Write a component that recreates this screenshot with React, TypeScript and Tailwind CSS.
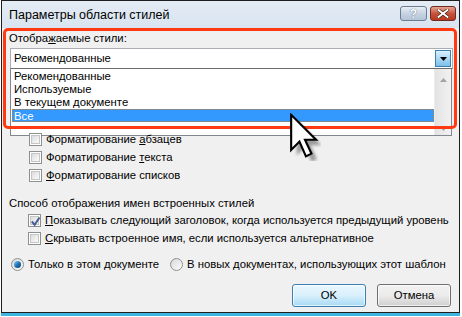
import React from "react";

function CheckBox({ checked = false }: { checked?: boolean }) {
  return (
    <div className="w-[13px] h-[13px] border border-[#8e8f8f] bg-white p-px shrink-0">
      <div className="w-full h-full border border-[#c6c6c6] bg-gradient-to-br from-[#dcdcdc] to-[#fbfbfb] relative">
        {checked && (
          <svg viewBox="0 0 9 9" className="absolute -left-px -top-px w-[11px] h-[11px]">
            <path d="M1.5 4.5 L3.8 7.2 L7.8 1.2" fill="none" stroke="#4a5f97" strokeWidth="1.7" />
          </svg>
        )}
      </div>
    </div>
  );
}

function Radio({ checked = false }: { checked?: boolean }) {
  return (
    <div className="w-[13px] h-[13px] rounded-full border border-[#8e8f8f] bg-gradient-to-br from-[#d8d8d8] to-[#fdfdfd] flex items-center justify-center shrink-0">
      {checked && (
        <div className="w-[7px] h-[7px] rounded-full bg-gradient-to-br from-[#8ad0f5] via-[#1f74b8] to-[#0d3f77]" />
      )}
    </div>
  );
}

function Row({ children }: { children: React.ReactNode }) {
  return <div className="flex items-center gap-[4px] h-[18px] whitespace-nowrap">{children}</div>;
}

export default function App() {
  const items = ["Рекомендованные", "Используемые", "В текущем документе", "Все"];

  return (
    <div className="w-[462px] h-[317px] bg-white relative overflow-hidden font-['Liberation_Sans',sans-serif] text-[11.3px] leading-[15px] text-black whitespace-nowrap">
      <div className="ml-px w-[459px] h-[313px] border-x border-b border-t border-[#1e1e1e] flex flex-col bg-[#f0f0f0]">
        {/* title bar */}
        <div className="h-[27px] bg-gradient-to-b from-[#e4ecf5] to-[#d9e4f0] flex items-start justify-between pl-[7px] pr-[3px] shrink-0">
          <div className="text-[12.5px] leading-[18px] pt-[5px] text-black">Параметры области стилей</div>
          <div className="flex gap-[3px] pt-[5px]">
            <div className="w-[27px] h-[15px] rounded-[3px] border border-[#6d7c8f] bg-gradient-to-b from-[#e9eff6] via-[#c6d3e2] to-[#b4c4d8] flex items-center justify-center text-white text-[12px] font-bold leading-none [text-shadow:0_0_1px_#2b3a4f]">
              ?
            </div>
            <div className="w-[26px] h-[15px] rounded-[3px] border border-[#6b2a22] bg-gradient-to-b from-[#e8a493] via-[#c7533c] to-[#b8381d] flex items-center justify-center">
              <svg viewBox="0 0 12 9" className="w-[12px] h-[9px]">
                <path d="M1.5 1 L10.5 8 M10.5 1 L1.5 8" stroke="#3a1a14" strokeWidth="3.2" strokeLinecap="square" />
                <path d="M1.5 1 L10.5 8 M10.5 1 L1.5 8" stroke="#fff" strokeWidth="1.9" strokeLinecap="square" />
              </svg>
            </div>
          </div>
        </div>

        {/* content */}
        <div className="flex-1 flex flex-col pl-[7px] pr-[6px]">
          <div className="mt-[3px] h-[16px]">
            Отобра<span className="underline">ж</span>аемые стили:
          </div>
          <div className="mt-[1px] ml-px w-[443px] h-[21px] bg-white border border-[#abadb3] border-b-[#6d6d6d] flex items-center justify-between pl-[3px] pr-px">
            <span>Рекомендованные</span>
            <div className="w-[16px] h-[17px] border border-[#3c7fb1] bg-gradient-to-b from-[#d9f0fc] to-[#79c0ea] flex items-center justify-center">
              <svg viewBox="0 0 7 4" className="w-[7px] h-[4px]">
                <path d="M0 0 H7 L3.5 4 Z" fill="#000" />
              </svg>
            </div>
          </div>
          <div className="ml-px w-[442px] h-[67px] bg-white border border-t-0 border-[#828790] flex">
            <div className="flex-1 flex flex-col pt-px pl-px">
              {items.map((it, i) => (
                <div
                  key={it}
                  className={
                    i === 3
                      ? "h-[13px] leading-[12px] pl-[1px] bg-[#3399ff] text-white border border-dotted border-[#c87a2a]"
                      : "h-[13px] leading-[13px] pl-[2px]"
                  }
                >
                  {it}
                </div>
              ))}
            </div>
            <div className="w-[17px] h-full bg-gradient-to-r from-[#e3e3e3] to-[#f2f2f2] border-l border-[#ececec] flex flex-col items-center justify-between pt-[9px] pb-[4px]">
              <svg viewBox="0 0 7 4" className="w-[7px] h-[4px]">
                <path d="M0 4 H7 L3.5 0 Z" fill="#a3a3a3" />
              </svg>
              <svg viewBox="0 0 7 4" className="w-[7px] h-[4px]">
                <path d="M0 0 H7 L3.5 4 Z" fill="#a3a3a3" />
              </svg>
            </div>
          </div>

          <div className="pl-[20px] flex flex-col">
            <div className="-mt-[6px]">
              <Row>
                <CheckBox />
                <span>
                  Форматирование <span className="underline">а</span>бзацев
                </span>
              </Row>
            </div>
            <Row>
              <CheckBox />
              <span>
                Форматирование <span className="underline">т</span>екста
              </span>
            </Row>
            <Row>
              <CheckBox />
              <span>
                <span className="underline">Ф</span>орматирование списков
              </span>
            </Row>
          </div>

          <div className="mt-[12px] h-[15px] leading-[15px]">Способ отображения имен встроенных стилей</div>
          <div className="pl-[19px] flex flex-col">
            <Row>
              <CheckBox checked />
              <span>
                <span className="underline">П</span>оказывать следующий заголовок, когда используется предыдущий уровень
              </span>
            </Row>
            <Row>
              <CheckBox />
              <span>
                <span className="underline">С</span>крывать встроенное имя, если используется альтернативное
              </span>
            </Row>
          </div>

          <div className="mt-[8px] flex items-center h-[18px] pl-[2px]">
            <Radio checked />
            <span className="ml-[4px]">Только в этом документе</span>
            <span className="ml-[11px]">
              <Radio />
            </span>
            <span className="ml-[4px]">В новых документах, использующих этот шаблон</span>
          </div>

          <div className="mt-[11px] flex justify-end gap-[11px] pr-[2px]">
            <div className="w-[74px] h-[23px] rounded-[3px] border border-[#3c7fb1] bg-gradient-to-b from-[#eaf6fd] via-[#d9f0fc] to-[#a7d9f5] flex items-center justify-center shadow-[inset_0_0_0_1px_#ffffffaa]">
              OK
            </div>
            <div className="w-[74px] h-[23px] rounded-[3px] border border-[#707070] bg-gradient-to-b from-[#f2f2f2] via-[#ebebeb] to-[#cfcfcf] flex items-center justify-center shadow-[inset_0_0_0_1px_#ffffffaa]">
              Отмена
            </div>
          </div>
        </div>
      </div>
      <div className="ml-px w-[459px] h-[3px] bg-[#3fb6e0]" />

      {/* red highlight annotation */}
      <div className="absolute left-[3px] top-[28px] w-[454px] h-[101px] border-[3px] border-[#ff3a12] rounded-[5px] pointer-events-none" />

      {/* mouse cursor */}
      <svg className="absolute left-[289px] top-[113px]" width="32" height="48" viewBox="0 0 34 52">
        <path
          d="M5 5 L5 43 L14 34 L21 50 L27 47 L20 32 L32 32 Z"
          fill="#000"
          opacity="0.35"
          transform="translate(3 3)"
          style={{ filter: "blur(1.5px)" }}
        />
        <path d="M2 2 L2 40 L11 31 L18 47 L24 44 L17 29 L29 29 Z" fill="#fff" stroke="#000" strokeWidth="2.3" strokeLinejoin="miter" />
      </svg>
    </div>
  );
}
